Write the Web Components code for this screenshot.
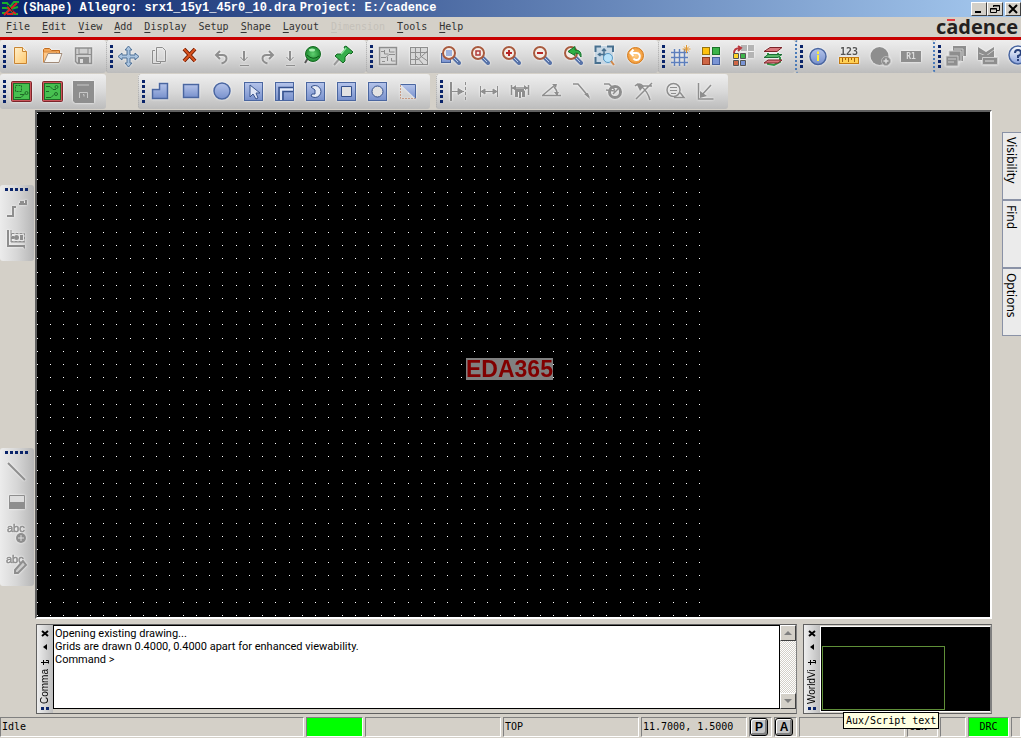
<!DOCTYPE html>
<html lang="en">
<head>
<meta charset="utf-8">
<title>Allegro</title>
<style>
html,body{margin:0;height:100%;background:#d4d0c8}
</style>
</head>
<body>
<cad-app></cad-app>
<script>
const MONO = '"DejaVu Sans Mono","Liberation Mono",monospace';

/* ---------- icon library: 25x25 boxes ---------- */
const G = '#8e8e8e';
const lens = inner => `<g transform="translate(-2 0)"><path d="M16 14l5 5" stroke="#5873a8" stroke-width="4" stroke-linecap="round"/><path d="M16 14l4 4" stroke="#b8cbe8" stroke-width="1"/><circle cx="11" cy="9" r="6" fill="#f4ece6" stroke="#a85a3e" stroke-width="2"/>${inner}</g>`;
const blueBox = inner => `<rect x="3.5" y="3.5" width="18" height="18" fill="url(#b)" stroke="#4a66a0"/>${inner}`;
const board = inner => `<rect x="2.5" y="2.5" width="20" height="20" rx="1" fill="#c9555b" stroke="#7c2328"/><rect x="4.5" y="4.5" width="16" height="16" fill="#47c050" stroke="#1d6d25"/>${inner}`;
const cell = (x,y,c,d) => `<rect x="${x}" y="${y}" width="7" height="7" fill="${c}" stroke="${d}"/>`;
const ICONS = {
 new:`<path d="M5.5 3.5h8l4 4v12h-12z" fill="url(#o)" stroke="#c88432"/><path d="M13.5 3.5v4h4" fill="#fff3d6" stroke="#c88432"/>`,
 open:`<path d="M3.5 18V5.5l1-1h5l2 2h8v3" fill="#f3a95c" stroke="#c06a1e"/><path d="M3.5 18.5V8h13v3" fill="#ffc98a" stroke="#d98a3e"/><path d="M4 18.5l4-9h14l-3 9z" fill="#f7f5f2" stroke="#a08a78"/>`,
 save:`<path d="M4.5 4h16v15.5h-14l-2-2z" fill="#d0d0d0" stroke="${G}" stroke-width="1.5"/><path d="M8 4v6h9V4M5 10.5h15" stroke="${G}"/><path d="M7 13h11v6H7z" fill="${G}"/><path d="M9 15h3v4H9z" fill="#ddd"/>`,
 move:`<path d="M12.5 2l3.5 4h-2v5h5V9l4 3.5-4 3.5v-2h-5v5h2l-3.5 4L9 19h2v-5H6v2l-4-3.5L6 9v2h5V6H9z" fill="#a9c3df" stroke="#4d6e93"/>`,
 copy:`<path d="M8 6.500H5.500v13h8v-2" fill="none" stroke="${G}"/><path d="M9.500 3.500h6l3 3v11h-9z" fill="none" stroke="${G}"/>`,
 del:`<path d="M6 5l11 12M17 5L6 17" stroke="#6f1e08" stroke-width="4"/><path d="M6 5l11 12M17 5L6 17" stroke="#d9531e" stroke-width="2"/>`,
 undo:`<path d="M11 7l-4 4 4 4M7.5 11h6q4 0 4 3.500t-5 5" fill="none" stroke="${G}" stroke-width="2"/>`,
 redo:`<path d="M14 7l4 4-4 4M17.5 11h-6q-4 0-4 3.500t5 5" fill="none" stroke="${G}" stroke-width="2"/>`,
 drop:`<path d="M6.500 7v9M7.500 7v9M3.500 13l3.500 4 3.500-4M3 21.500h9" fill="none" stroke="${G}"/>`,
 ball:`<path d="M7 14l-3 5" stroke="#555" stroke-width="2"/><circle cx="12" cy="10" r="7.5" fill="url(#g)" stroke="#156a22"/><path d="M6 11q6 6 12 1" stroke="#0c5a18" fill="none"/><ellipse cx="11" cy="6" rx="3" ry="1.5" fill="#a8eeb0"/>`,
 pin:`<path d="M8 14l-6 7" stroke="#999" stroke-width="2"/><path d="M14 2l7 6-2 2-2-1-4 4v4l-2 2-8-7 2-2h4l4-5-1-2z" fill="#35ad4b" stroke="#13631f"/><path d="M14 4l-5 6" stroke="#96e3a2" stroke-width="1.5"/>`,
 rats:`<rect x="3.5" y="3.5" width="17" height="17" fill="#d8d8d8" stroke="${G}" stroke-width="1.5"/><path d="M5 7.500h4M8.500 6v4h4M13.500 5v3h5M5 13.500h5l3-3h6M11.500 13v4M6 17.500h3M15.500 14v3h4" stroke="${G}" fill="none"/>`,
 rats2:`<rect x="3.5" y="3.5" width="17" height="17" fill="#d8d8d8" stroke="${G}"/><path d="M8.500 4v17M4 8.500h17M4 15.500h7l9-8M13.500 4v8l7 5M9 12l7 8" stroke="${G}" fill="none"/>`,
 zfit:`<rect x="3.5" y="9.5" width="9" height="9" fill="url(#b)" stroke="#4a66a0"/><g transform="translate(2 0)">${lens('<rect x="8" y="6" width="6" height="6" fill="#9db2de"/>')}</g>`,
 zwin:lens('<rect x="9" y="7" width="4" height="4" fill="none" stroke="#b03a3a" stroke-width="1.5"/>'),
 zin:lens('<path d="M11 6v6M8 9h6" stroke="#b82525" stroke-width="2"/>'),
 zout:lens('<path d="M8 9h6" stroke="#b82525" stroke-width="2"/>'),
 zprev:lens('')+`<path d="M19 13q1-7-6-7V2.500L6 7.500l7 4V9q4-1 6 4" fill="#2eb044" stroke="#14702a"/>`,
 zworld:`<rect x="2" y="2" width="18" height="18" fill="#c7d7e4"/><path d="M2.500 8V2.500H8M14 2.500h6V8M2.500 13v6H8" fill="none" stroke="#48708f" stroke-width="2"/><path d="M11 5v11M5.500 10.500h11M9 7l2-2 2 2M7.500 9l-2 1.500 2 1.500" stroke="#48708f" fill="none" stroke-width="1.5"/><circle cx="15" cy="14" r="4.500" fill="#b7e2fa" stroke="#5899c4"/><path d="M18 17l3 4" stroke="#d2884a" stroke-width="2"/>`,
 refresh:`<circle cx="11.5" cy="11.5" r="8" fill="url(#r)" stroke="#d07a20"/><path d="M7 9h5.500a3.500 3.500 0 1 1-3 5.500M9.500 5.500L6.500 9l3 3" fill="none" stroke="#fff" stroke-width="2"/>`,
 grid:`<path d="M6.5 5v17M11.5 5v17M16.5 5v17M3 8.5h17M3 13.5h17M3 18.5h17" stroke="#5d7fbd" stroke-width="1.5"/><path d="M18.5 1v8M14.5 5h8M16 2.500l5 5M21 2.500l-5 5" stroke="#e0962e"/>`,
 colors:cell(3.5,3.5,'#ffc20e','#95730f')+cell(13.5,3.5,'#3cb44a','#1b7228')+cell(3.5,13.5,'#cf6645','#8a3a22')+cell(13.5,13.5,'#7a94d4','#465f9c'),
 recolor:`<path d="M11 1h6v6h-6zM18 1h6v6h-6zM18 8h6v6h-6z" fill="#b4b4b4"/><path d="M4 9q0-5 6-5M8 2l3 2-3 3" fill="none" stroke="#b8363c" stroke-width="2"/><g stroke="#555"><path d="M3.5 9.500h5v5h-5z" fill="#ffd428"/><path d="M10.5 9.500h5v5h-5z" fill="#3cb44a"/><path d="M3.5 16.500h5v5h-5z" fill="#cf6645"/><path d="M10.5 16.500h5v5h-5z" fill="#7a94d4"/></g>`,
 layers:`<path d="M7 16v4l6 1 6-3v-5M7 9v5M17 9v4" fill="none" stroke="#2f9a46" stroke-width="2"/><path d="M3 19l4-3h14l-4 3z" fill="#d8777c" stroke="#7c2328"/><path d="M3 13.500l4-3h14l-4 3z" fill="#58b868" stroke="#1d6d35"/><path d="M3 7.500l6-4h12l-5 4z" fill="#d8777c" stroke="#7c2328"/>`,
 info:`<circle cx="12" cy="12.5" r="8" fill="url(#b)" stroke="#4a66a0" stroke-width="1.5"/><path d="M12 7.500v2.500M12 11v6" stroke="#ffee3a" stroke-width="2"/>`,
 ruler:`<text x="12" y="11" font-family="DejaVu Sans Mono" font-weight="bold" font-size="10" text-anchor="middle" fill="#555">123</text><rect x="2.5" y="13.5" width="19" height="6" fill="#ffd054" stroke="#c37a12"/><path d="M5.5 14v4M8.5 14v2M11.5 14v4M14.5 14v2M17.5 14v4" stroke="#a2620c"/>`,
 circplus:`<circle cx="11.5" cy="12" r="9" fill="${G}"/><circle cx="18" cy="17" r="4.500" fill="${G}" stroke="#bbb"/><path d="M18 14.500v5M15.500 17h5" stroke="#ddd" stroke-width="1.5"/>`,
 r1:`<path d="M2 7h20v11H2z" fill="${G}"/><text x="12" y="15" font-family="DejaVu Sans Mono" font-weight="bold" font-size="8" text-anchor="middle" fill="#ddd">R1</text>`,
 cards:`<path d="M9 2h13v10h-3v5H9z" fill="${G}"/><path d="M10 5h9v7" stroke="#ccc" fill="none"/><path d="M5 7h12v10H5z" fill="${G}" stroke="#ccc"/><path d="M2 12h12v10H2z" fill="${G}" stroke="#ccc"/><path d="M4 15h8M4 18h6" stroke="#ccc"/>`,
 mail:`<path d="M3 3l8 5 8-5v9H3z" fill="${G}"/><path d="M4 9l7 3 8-6" stroke="#ccc" fill="none"/><path d="M3 11h16v5H3z" fill="${G}"/><path d="M7.500 13.500h15v7h-15z" fill="${G}" stroke="#ccc"/><path d="M10 17h9" stroke="#ddd"/>`,
 help:`<circle cx="12" cy="11" r="9" fill="url(#w)" stroke="#4a66a0" stroke-width="1.5"/><path d="M9 9q0-3 3-3t3 3q0 2-3 3v2M12 15v2" fill="none" stroke="#27407c" stroke-width="2"/><path d="M15 18l6 4-2-7z" fill="#7d97cf"/>`,
 brd1:board('<rect x="6.5" y="6.5" width="6" height="6" fill="none" stroke="#1f6a28" stroke-dasharray="2 1"/><path d="M6 18.500h6l4-4M11 15.500h4" fill="none" stroke="#1f6a28"/><circle cx="17.500" cy="14" r="1.5" stroke="#1f6a28"/>'),
 brd2:board('<path d="M6 7.500h4l3 3h3M6 18.500h5l3-3M6 12.500h3" fill="none" stroke="#1f6a28"/><circle cx="16.500" cy="8" r="1.5" stroke="#1f6a28"/><circle cx="16" cy="15" r="1.5" stroke="#1f6a28"/>'),
 disk:`<path d="M2 2h21v22H4l-2-2z" fill="${G}"/><path d="M6 6h12M8.500 19v-5.500h8V19M12 15.500h1v2" stroke="#c8c8c8"/>`,
 poly:`<path d="M4.5 19.500v-9h7v-6h8v15z" fill="url(#b)" stroke="#4a66a0" stroke-width="1.5"/>`,
 rect:`<path d="M4.5 5.500h15v13h-15z" fill="url(#b)" stroke="#4a66a0" stroke-width="1.5"/>`,
 circ:`<circle cx="12" cy="12" r="8" fill="url(#b)" stroke="#4a66a0" stroke-width="1.5"/>`,
 select:blueBox('<path d="M9 6v12l3-3 3 5 2-1-2-5h4z" fill="#dfe6f5" stroke="#3b568f"/>'),
 lshape:blueBox('<path d="M7 21V8.500h14M11 21v-8.500h10" fill="none" stroke="#34508c" stroke-width="1.5"/><path d="M9 21V10.500h12" fill="none" stroke="#e6ecf8" stroke-width="2"/>'),
 arc:blueBox('<path d="M8 8a6 6 0 1 1 0 9l1-2h3v-4z" fill="#e6ebf5" stroke="#34508c"/>'),
 rvoid:blueBox('<path d="M7.5 7.500h10v10h-10z" fill="#e2e2e2" stroke="#34508c"/>'),
 cvoid:blueBox('<circle cx="12.5" cy="12.5" r="5.5" fill="#e2e2e2" stroke="#34508c"/>'),
 corner:`<path d="M4.5 5.500h15v14z" fill="url(#b)"/><path d="M4.5 5.500h15v14" fill="none" stroke="#4a66a0"/><path d="M4.5 6v13.500h15" fill="none" stroke="#c79a83" stroke-dasharray="2 1"/>`,
 d1:`<path d="M5 3v19" stroke="${G}" stroke-width="2"/><path d="M19.500 3v19" stroke="${G}" stroke-dasharray="3 2"/><path d="M6 12.500h12M12 9.500l5 3-5 3z" stroke="${G}" fill="${G}"/>`,
 d2:`<path d="M3.500 7v11M20.500 7v11M4 12.500h16M8 10l-4 2.500L8 15zM16 10l4 2.500-4 2.500z" stroke="${G}" fill="${G}"/>`,
 d3:`<path d="M3.500 6v10M20.500 6v10M4 9h16" stroke="${G}" stroke-width="1.5"/><path d="M4 9l4-3v6zM20 9l-4-3v6zM7 10h10v8h-3v-5h-1v6h-2v-6h-1v5H7z" fill="${G}"/>`,
 d4:`<path d="M3 16.500h19M4 16L16 6M15 8q4 4 3 9" stroke="${G}" fill="none" stroke-width="1.5"/><path d="M13 5h5l-1 4zM15 13h5l-2 4z" fill="${G}"/>`,
 d5:`<path d="M3 5h5l11 13" stroke="${G}" fill="none" stroke-width="1.5"/><path d="M14 15l4-1 2 6z" fill="${G}"/>`,
 d6:`<path d="M3 5h5l6 6" stroke="${G}" fill="none" stroke-width="1.5"/><circle cx="14" cy="13" r="5.500" fill="none" stroke="${G}" stroke-width="3"/><path d="M5 11l9 1M12 15l5-5" stroke="${G}" stroke-width="1.5"/>`,
 d7:`<path d="M5 5l5 3q6 5 8 13M20 4L4 20M3 7q4-4 8 0h9" fill="none" stroke="${G}" stroke-width="1.5"/><path d="M5 6l7 1-4 5z" fill="${G}"/>`,
 d8:`<circle cx="10.5" cy="11" r="6.500" fill="none" stroke="${G}" stroke-width="1.5"/><path d="M7 8.500h7M7 11.500h7M8 14.500h5" stroke="${G}"/><path d="M11 18.500h10l-4-5" fill="none" stroke="${G}" stroke-width="1.5"/>`,
 d9:`<path d="M4.500 4v16h15M17 6L7 17" fill="none" stroke="${G}" stroke-width="1.5"/><path d="M6 12v7l7-2z" fill="${G}"/>`,
 route:`<path d="M3 20h6v-9h3M15 8h2v-2h3" fill="none" stroke="${G}" stroke-width="2"/><path d="M17 8h5v-4" stroke="${G}" stroke-width="2"/>`,
 place:`<path d="M4 3v16h17" fill="none" stroke="${G}" stroke-width="2"/><path d="M7 3v12h14" stroke="${G}"/><path d="M7.500 6.500h13v8h-13z" fill="none" stroke="${G}" stroke-dasharray="3 1"/><circle cx="12.500" cy="10.500" r="2.500" fill="${G}"/><path d="M16 8h3v5h-3zM8 9h2v3H8zM17 18h4v4z" fill="${G}"/>`,
 line:`<path d="M4 4l17 17" stroke="${G}" stroke-width="2"/>`,
 frect:`<path d="M5.500 5.500h15v13h-15z" fill="#ddd" stroke="${G}"/><path d="M5 12h16v7H5z" fill="${G}"/>`,
 abcp:`<text x="3" y="11" font-family="Liberation Sans" font-size="11" fill="${G}" stroke="${G}" stroke-width="0.5">abc</text><circle cx="17" cy="17" r="5" fill="${G}"/><path d="M17 14v6M14 17h6" stroke="#ddd"/>`,
 abce:`<text x="2" y="11" font-family="Liberation Sans" font-size="11" fill="${G}" stroke="${G}" stroke-width="0.5">abc</text><path d="M19 9l-8 9v3h3l8-8z" fill="#ccc" stroke="${G}" stroke-width="2"/>`
};
const DEFS = `<defs>
<linearGradient id="b" x1="0" y1="0" x2="0" y2="1"><stop offset="0" stop-color="#b5c4ea"/><stop offset="1" stop-color="#7790cc"/></linearGradient>
<linearGradient id="o" x1="0" y1="0" x2="1" y2="1"><stop offset="0" stop-color="#fff0cc"/><stop offset="1" stop-color="#ffc96e"/></linearGradient>
<linearGradient id="w" x1="0" y1="0" x2="0" y2="1"><stop offset="0" stop-color="#fff"/><stop offset="1" stop-color="#8aa2dc"/></linearGradient>
<radialGradient id="g"><stop offset="0" stop-color="#5fd070"/><stop offset="1" stop-color="#1e8a30"/></radialGradient>
<radialGradient id="r"><stop offset="0" stop-color="#ffd08a"/><stop offset="1" stop-color="#f29a38"/></radialGradient></defs>`;

function define(name, html, setup) {
  const t = document.createElement('template');
  t.innerHTML = html;
  customElements.define(name, class extends HTMLElement {
    constructor() {
      super();
      this.attachShadow({mode: 'open'}).append(t.content.cloneNode(true));
    }
    connectedCallback() { if (setup) setup(this, this.shadowRoot); }
  });
}

/* ---------- title bar ---------- */
define('title-bar', `<style>
:host{display:flex;align-items:center;height:17px;background:linear-gradient(90deg,#0a246a,#a6caf0);color:#fff;font:bold 12px/17px "Liberation Mono",monospace;white-space:pre}
.logo{margin:0 3px 0 2px}
h1{font:inherit;margin:0;flex:1;display:flex;gap:4px}
button{box-sizing:border-box;width:16px;height:14px;padding:0;border:1px solid;border-color:#fff #404040 #404040 #fff;background:#d4d0c8;display:grid;place-items:center}
button:last-of-type{margin-left:2px}
</style>
<svg class="logo" width="17" height="17" viewBox="0 0 17 17"><path d="M0 3h5l3 4 4-5h5M0 8h4l5 1 7-2M0 13h4l4-4 4 5h4" stroke="#18b02c" stroke-width="2" fill="none"/><path d="M2 15L15 3M5 7l9 7M5 14h6" stroke="#e02020" stroke-width="2"/><path d="M6 5l5 7" stroke="#222"/></svg>
<h1><span>(Shape) Allegro: srx1_15y1_45r0_10.dra</span><span>Project: E:/cadence</span></h1>
<button aria-label="Minimize"><svg width="12" height="10"><path d="M2 8h6" stroke="#000" stroke-width="2"/></svg></button>
<button aria-label="Restore"><svg width="12" height="10"><path d="M4.5 3V1.5h6v5H8M4 2h7M1.5 4.5h6v4h-6zM1 5h7" fill="none" stroke="#000"/></svg></button>
<button aria-label="Close"><svg width="12" height="10"><path d="M2 1l8 8M10 1L2 9" stroke="#000" stroke-width="2"/></svg></button>`);

/* ---------- menu bar ---------- */
define('menu-bar', `<style>
:host{display:flex;align-items:center;height:20px;border-bottom:3px solid #c80000;padding:0 3px 0 6px;font:10px/20px ${MONO};color:#333}
nav{display:flex;gap:12px;flex:1}
button{font:inherit;color:inherit;background:none;border:0;padding:0}
button:disabled{color:#c4c0b9}
u{text-underline-offset:2px}
.brand{position:relative;font:bold 20px/20px "Open Sans","Noto Sans",sans-serif;color:#231f20}
.brand i{position:absolute;left:11px;top:2px;width:8px;height:2px;background:#e23a3e}
</style>
<nav aria-label="Main"></nav><div class="brand">cadence<i></i></div>`, (el, root) => {
  root.querySelector('nav').innerHTML = ['_File','_Edit','_View','_Add','_Display','Set_up','_Shape','_Layout','_Dimension','_Tools','_Help']
    .map(s => `<button${s === '_Dimension' ? ' disabled' : ''}>${s.replace(/_(.)/, '<u>$1</u>')}</button>`).join('');
});

/* ---------- tool groups ---------- */
define('tool-button', `<style>
:host{display:block;flex:none;width:31px}
:host([narrow]){width:15px}
button{display:flex;justify-content:center;align-items:center;width:100%;padding:0;border:0;background:none}
svg{display:block;flex:none;filter:drop-shadow(0 0 1px #fff)}
</style><button></button>`, (el, root) => {
  const id = el.getAttribute('icon'), b = root.querySelector('button');
  const w = el.hasAttribute('narrow') ? 15 : 25;
  b.setAttribute('aria-label', id);
  b.disabled = ICONS[id].includes(G);
  b.innerHTML = `<svg width="${w}" height="25" viewBox="0 0 ${w} 25" fill="none">${DEFS}${ICONS[id]}</svg>`;
});
define('tool-group', `<style>
:host{box-sizing:border-box;flex:none;display:flex;align-items:center;height:33px;padding:0 6px 0 3px;border-left:1px dotted #a9a9a9;border-radius:3px;background:linear-gradient(#eee,#d9d9d9 50%,#bcbcbc)}
:host([first]){border-left:0;padding-right:7px}
:host([accent]){border-left:2px dotted #4a7ab8}
:host([tall]){height:35px}
.grip{flex:none;width:3px;height:23px;background:repeating-linear-gradient(#0a246a 0 3px,transparent 3px 5px)}
:host([vertical]){flex-direction:column;width:34px;height:auto;padding:3px 2px 9px 0;border:0;background:linear-gradient(90deg,#ececec,#d6d6d6 50%,#b6b6b6)}
:host([vertical]) .grip{width:23px;height:3px;margin-bottom:5px;background:repeating-linear-gradient(90deg,#0a246a 0 3px,transparent 3px 5px)}
:host([vertical]) .items{flex-direction:column;gap:6px}
.items{display:flex}
</style><div class="grip"></div><div class="items" role="toolbar"></div>`, (el, root) => {
  root.querySelector('.items').innerHTML = el.getAttribute('tools').split(' ')
    .map(n => `<tool-button icon="${n}"${n === 'drop' ? ' narrow' : ''}></tool-button>`).join('');
});

/* ---------- drawing area with its grid of dots ---------- */
define('design-canvas', `<style>
:host{position:relative;display:block;overflow:hidden;background:#000;border:2px solid;border-color:#606060 #fff #fff #606060;min-height:300px}
canvas{display:block;position:absolute;left:0;top:0}
.label{position:absolute;left:429px;top:246px;background:#808080;color:#800000;font:bold 23px/22px "Liberation Sans",Arial,sans-serif}
</style><canvas width="670" height="510"></canvas><div class="label">EDA365</div>`, (el, root) => {
  const c = root.querySelector('canvas').getContext('2d');
  c.fillStyle = '#fff';
  for (let i = 0; i <= 50; i++) for (let j = 0; j <= 38; j++)
    c.fillRect(Math.round(i * 662 / 50), 1 + Math.round(j * 502 / 38), 1, 1);
});

/* ---------- side tabs ---------- */
define('side-tab', `<style>
:host{display:block}
button{box-sizing:border-box;display:block;width:19px;height:68px;padding:4px 3px 4px 0;border:1px solid #8a92a6;border-width:1px 0 1px 1px;background:#ebebeb;color:#000;writing-mode:vertical-rl;text-align:left;font:12px/14px "Noto Sans",sans-serif}
</style><button role="tab"><slot></slot></button>`);

/* ---------- docked panels ---------- */
define('dock-panel', `<style>
:host{box-sizing:border-box;display:flex;height:90px;border:1px solid;border-color:#606060 #808080 #606060 #606060;min-width:0}
.strip{flex:none;width:16px;box-sizing:border-box;padding:3px 0;display:flex;flex-direction:column;align-items:center;background:linear-gradient(90deg,#eee,#bdbdbd)}
button{display:block;flex:none;border:0;padding:0;background:none;height:10px}
button+button{margin-top:4px}
svg{display:block}
.t{flex:none;height:35px;width:14px;margin-top:3px;overflow:hidden;writing-mode:vertical-rl;transform:rotate(180deg);white-space:nowrap;font:10px/14px "Liberation Sans",sans-serif;color:#000}
.grip{flex:none;width:8px;height:3px;margin-top:3px;background:repeating-linear-gradient(90deg,#0a246a 0 3px,transparent 3px 5px)}
.body{flex:1;min-width:0;display:flex}
</style>
<div class="strip"><button aria-label="Close"><svg width="8" height="10"><path d="M1 3l6 5M7 3L1 8" stroke="#000" stroke-width="2"/></svg></button>
<button aria-label="Collapse"><svg width="8" height="10"><path d="M6 2v6L2 5z"/></svg></button>
<button aria-label="Pin"><svg width="10" height="10"><path d="M1 6.5h8M3.5 4v5M6 4.5h2.5v3" stroke="#000" fill="none"/></svg></button>
<div class="t"></div><div class="grip"></div></div><div class="body"><slot></slot></div>`, (el, root) => {
  root.querySelector('.t').textContent = el.getAttribute('name');
});

define('command-log', `<style>
:host{display:flex;flex:1;min-width:0;padding-bottom:4px}
textarea{flex:1;min-width:0;box-sizing:border-box;margin:0;padding:1px;border:1px solid #000;background:#fff;color:#000;resize:none;overflow:hidden;font:11px/13px Roboto,"Liberation Sans",sans-serif}
.bar{width:16px;display:flex;flex-direction:column;background:repeating-conic-gradient(#fff 0 25%,#d4d0c8 0 50%) 0 0/2px 2px}
button{box-sizing:border-box;height:16px;width:16px;padding:0;border:1px solid;border-color:#fff #404040 #404040 #fff;background:#d4d0c8;display:grid;place-items:center}
.bar i{flex:1}
</style><textarea aria-label="Command window" readonly>Opening existing drawing...
Grids are drawn 0.4000, 0.4000 apart for enhanced viewability.
Command ></textarea>
<div class="bar"><button aria-label="Scroll up"><svg width="10" height="6"><path d="M1 5l4-4 4 4z" fill="#808080"/></svg></button><i></i><button aria-label="Scroll down"><svg width="10" height="6"><path d="M1 1l4 4 4-4z" fill="#808080"/></svg></button></div>`);

define('world-view', `<style>
:host{box-sizing:border-box;flex:1;display:block;margin:1px 0;border:1px solid #fff;border-right-color:#808080;background:#000;padding:19px 45px 1px 1px}
div{box-sizing:border-box;height:100%;border:1px solid #5f8f38}
</style><div></div>`);

/* ---------- status bar ---------- */
define('status-cell', `<style>
:host{box-sizing:border-box;position:relative;display:block;height:20px;border:1px solid;border-color:#808080 #fff #fff #808080;padding-left:1px;font:10px/18px ${MONO};color:#000;white-space:pre}
:host([lit]){background:#0f0;text-align:center;padding:0}
</style><slot></slot>`);
define('key-button', `<style>
:host{display:block}
button{box-sizing:border-box;display:block;width:18px;height:18px;padding:0;border:1px solid #000;border-radius:3px;background:#c6c6c6;box-shadow:inset 1px 1px #fff,inset -2px -2px #808080;font:bold 12px/15px "Liberation Sans",sans-serif;color:#000}
</style><button><slot></slot></button>`);

define('cad-app', `<style>
:host{display:flex;flex-direction:column;min-height:100vh;overflow:hidden;background:#d4d0c8}
.row{display:flex;overflow:hidden}
.row+.row{margin-top:1px}
.gap1{margin-left:32px}.gap2{margin-left:6px}
main{flex:1;display:grid;grid-template-columns:35px minmax(0,1fr) 29px;margin-top:1px}
.rail{display:flex;flex-direction:column}
.rail tool-group:first-child{margin-top:75px}
.rail tool-group+tool-group{margin-top:187px}
.tabs{padding-top:22px;display:flex;flex-direction:column;align-items:flex-end}
.docks{display:flex;gap:6px;margin:5px 29px 3px 36px}
.docks .cmd{flex:1}.docks .world{width:189px}
footer{display:flex;gap:2px;padding-bottom:1px}
footer .idle{flex:1}
.tip{position:absolute;z-index:2;left:43px;bottom:7px;padding:0 2px;height:15px;border:1px solid #000;background:#ffffe1;font:10px/15px ${MONO}}
</style>
<title-bar></title-bar><menu-bar></menu-bar>
<div class="row">
<tool-group first tools="new open save"></tool-group>
<tool-group tools="move copy del undo drop redo drop ball pin"></tool-group>
<tool-group tools="rats rats2 zfit zwin zin zout zprev zworld refresh"></tool-group>
<tool-group tools="grid colors recolor layers"></tool-group>
<tool-group accent tools="info ruler circplus r1"></tool-group>
<tool-group accent tools="cards mail help"></tool-group>
</div>
<div class="row">
<tool-group first tall tools="brd1 brd2 disk"></tool-group>
<tool-group class="gap1" tall tools="poly rect circ select lshape arc rvoid cvoid corner"></tool-group>
<tool-group class="gap2" tall tools="d1 d2 d3 d4 d5 d6 d7 d8 d9"></tool-group>
</div>
<main>
<div class="rail"><tool-group vertical tools="route place"></tool-group><tool-group vertical tools="line frect abcp abce"></tool-group></div>
<design-canvas></design-canvas>
<div class="tabs" role="tablist"><side-tab>Visibility</side-tab><side-tab>Find</side-tab><side-tab>Options</side-tab></div>
</main>
<div class="docks"><dock-panel class="cmd" name="Command"><command-log></command-log></dock-panel><dock-panel class="world" name="WorldView"><world-view></world-view></dock-panel></div>
<footer>
<status-cell class="idle">Idle</status-cell>
<status-cell lit style="width:57px"></status-cell>
<status-cell style="width:136px"></status-cell>
<status-cell style="width:136px">TOP</status-cell>
<status-cell style="width:106px">11.7000, 1.5000</status-cell>
<status-cell style="width:23px;padding:0"><key-button>P</key-button></status-cell>
<status-cell style="width:23px;padding:0"><key-button>A</key-button></status-cell>
<status-cell style="width:106px"><div class="tip" role="tooltip">Aux/Script text</div></status-cell>
<status-cell style="width:31px">GEN</status-cell>
<status-cell style="width:26px"></status-cell>
<status-cell lit style="width:41px">DRC</status-cell>
<status-cell style="width:10px"></status-cell>
</footer>`);
</script>
</body>
</html>
